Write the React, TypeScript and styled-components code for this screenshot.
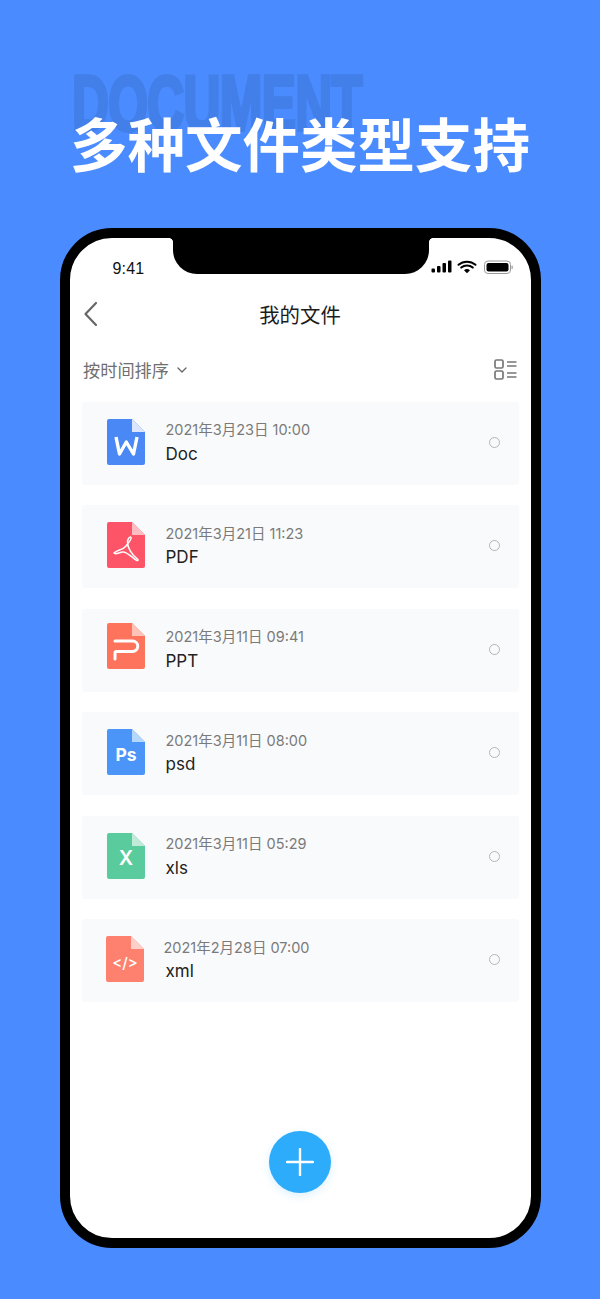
import React from "react";
import styled, { createGlobalStyle } from "styled-components";

const Global = createGlobalStyle`
  html, body { margin: 0; padding: 0; }
  body { background: #4a8cff; font-family: "Inter", "Noto Sans CJK SC", sans-serif; }
`;
const Page = styled.div`
  width: 600px; height: 1299px; background: #4a8cff; overflow: hidden;
  display: flex; flex-direction: column; align-items: center;
`;
const Hero = styled.div`
  position: relative; width: 600px; height: 228px; flex: none;
`;
const Ghost = styled.div`
  position: absolute; left: 72px; top: 58px;
  font: 900 78px/90px "Liberation Sans", sans-serif;
  -webkit-text-stroke: 4px #437fe9;
  color: #437fe9; letter-spacing: -1px; white-space: nowrap;
  transform: scaleX(0.655); transform-origin: left top;
`;
const Headline = styled.h1`
  position: relative; margin: 0; padding-top: 100px; text-align: center;
  font: 700 57.5px/84px "Noto Sans CJK SC", sans-serif; color: #fff; white-space: nowrap;
`;
const Phone = styled.div`
  position: relative; box-sizing: border-box; width: 481px; height: 1020px; flex: none;
  background: #fff; border: 10.5px solid #000; border-radius: 52px; overflow: hidden;
  display: flex; flex-direction: column;
`;
const Notch = styled.div`
  position: absolute; left: 103px; top: 0; width: 256px; height: 36px;
  background: #000; border-radius: 0 0 24px 24px;
  &::before, &::after {
    content: ""; position: absolute; top: 0; width: 4px; height: 4px;
  }
  &::before { left: -4px; background: radial-gradient(circle at 0 100%, transparent 3.6px, #000 4.2px); }
  &::after { right: -4px; background: radial-gradient(circle at 100% 100%, transparent 3.6px, #000 4.2px); }
`;
const StatusBar = styled.div`
  display: flex; align-items: center; justify-content: space-between; flex: none;
  height: 36px; padding: 11px 18px 0 42px;
`;
const Time = styled.span`
  font: 400 16px/20px "Liberation Sans", sans-serif; color: #111; letter-spacing: 0.2px;
  margin: 4px 0 0 1px;
`;
const NavBar = styled.div`
  position: relative; flex: none; height: 43px; margin-top: 7px;
  display: flex; align-items: center; justify-content: center;
`;
const Back = styled.svg`
  position: absolute; left: 13px; top: 9px; width: 15px; height: 26px;
`;
const NavTitle = styled.div`
  font: 400 20.4px/28px "Noto Sans CJK SC", sans-serif; color: #1c1c1c;
`;
const SortBar = styled.div`
  flex: none; height: 40px; margin-top: 14.5px; padding: 0 14px 0 13px;
  display: flex; align-items: center; justify-content: space-between;
`;
const SortLabel = styled.div`
  display: flex; align-items: center; gap: 8px; margin-left: 0.5px;
  font: 400 17.2px/24px "Noto Sans CJK SC", sans-serif; color: #6f6f6f;
`;
const List = styled.div`
  flex: none; margin: 12px 12px 0; display: flex; flex-direction: column; gap: 20.5px;
`;
const Row = styled.div`
  box-sizing: border-box; height: 83px; background: #f9fafc; border-radius: 3px;
  display: flex; align-items: center; padding: 0 19px 0 25.5px;
`;
const IconWrap = styled.svg<{ $shift?: number; $lift?: number }>`
  width: 38px; height: 46px; flex: none;
  margin-top: ${(p) => -3 - (p.$lift ?? 0) * 2}px;
  margin-left: ${(p) => p.$shift ?? 0}px;
  margin-right: ${(p) => 20.5 - (p.$shift ?? 0)}px;
`;
const Texts = styled.div`
  flex: 1; display: flex; flex-direction: column; gap: 1.5px; margin-top: -1.5px;
`;
const DateText = styled.div<{ $shift?: number }>`
  margin-left: ${(p) => p.$shift ?? 0}px;
  font: 400 14.5px/21px "Inter", "Noto Sans CJK SC", sans-serif; color: #7a7a7a;
  white-space: nowrap;
`;
const Name = styled.div`
  font: 400 17px/24px "Inter", "Noto Sans CJK SC", sans-serif; color: #222;
`;
const Radio = styled.div`
  box-sizing: border-box; width: 11px; height: 11px; border-radius: 50%; margin-top: -2px;
  border: 1.5px solid #b5b5b5; flex: none;
`;
const Fab = styled.div`
  position: absolute; left: 199px; bottom: 45px; width: 62px; height: 62px; border-radius: 50%;
  background: #2dacfb; box-shadow: 0 3px 8px rgba(45, 172, 251, 0.16);
  display: flex; align-items: center; justify-content: center;
`;

type Item = {
  date: string; name: string; color: string; fold: string; art: React.ReactNode;
  iconShift?: number; dateShift?: number; iconLift?: number;
};
const glyph = { fill: "#fff", fontFamily: "Inter, sans-serif", fontWeight: 700, textAnchor: "middle" as const };
const items: Item[] = [
  {
    date: "2021年3月23日 10:00", name: "Doc", color: "#4a88f5", fold: "#dbe5fb",
    art: <path d="M9 18 12.5 35 19.3 23 26.5 35 30 18" fill="none" stroke="#fff" strokeWidth="3.4" strokeLinejoin="round" />,
  },
  {
    date: "2021年3月21日 11:23", name: "PDF", color: "#fd5467", fold: "#febcc3",
    art: <path d="M7 31C11 27 15 29 19 24 22 20 25 17 24 15.5 23 14 20.5 17 20.5 20 20.5 26 25 33 30 36.5 32 38 31 39 29 38 24 35 20 29 15 30 11 31 8 33 7 31Z" fill="none" stroke="#fff" strokeWidth="1.5" strokeLinejoin="round" />,
  },
  {
    date: "2021年3月11日 09:41", name: "PPT", color: "#fe735c", fold: "#ffc2b8", iconLift: 2.4,
    art: <path d="M8 18H25.5a5.2 5.2 0 0 1 0 10.5H9.5A1.5 1.5 0 0 0 8 30V36" fill="none" stroke="#fff" strokeWidth="3" strokeLinecap="round" strokeLinejoin="round" />,
  },
  {
    date: "2021年3月11日 08:00", name: "psd", color: "#4c95f8", fold: "#b5d7fb", iconLift: 0.5,
    art: <text x="19" y="32" fontSize="17.5" {...glyph}>Ps</text>,
  },
  {
    date: "2021年3月11日 05:29", name: "xls", color: "#5acb9d", fold: "#c2eadb",
    art: <text x="19" y="32" fontSize="20" {...glyph} fontWeight={600}>X</text>,
  },
  {
    date: "2021年2月28日 07:00", name: "xml", color: "#fe8170", fold: "#ffd0c9", iconShift: -1, dateShift: -2,
    art: <text x="19" y="32" fontSize="15" {...glyph} fontWeight={500}>{"</>"}</text>,
  },
];

function FileIcon({ item }: { item: Item }) {
  return (
    <IconWrap viewBox="0 0 38 46" $shift={item.iconShift} $lift={item.iconLift}>
      <path d="M2 0H25L38 13V44a2 2 0 0 1-2 2H2a2 2 0 0 1-2-2V2a2 2 0 0 1 2-2Z" fill={item.color} />
      <path d="M25 0 38 13H25Z" fill={item.fold} />
      {item.art}
    </IconWrap>
  );
}

export default function App() {
  return (
    <Page>
      <Global />
      <Hero>
        <Ghost>DOCUMENT</Ghost>
        <Headline>多种文件类型支持</Headline>
      </Hero>
      <Phone>
        <Notch />
        <StatusBar>
          <Time>9:41</Time>
          <svg width="82" height="15" viewBox="0 0 82 15">
            <rect x="0.5" y="8.5" width="3.5" height="4" rx="1" fill="#000" />
            <rect x="6" y="6" width="3.5" height="6.5" rx="1" fill="#000" />
            <rect x="11.5" y="3" width="3.5" height="9.5" rx="1" fill="#000" />
            <rect x="17" y="0.5" width="3.5" height="12" rx="1" fill="#000" />
            <path d="M27.5 4.8a13 13 0 0 1 17 0M30.2 7.6a9 9 0 0 1 11.6 0" fill="none" stroke="#000" strokeWidth="2" strokeLinecap="round" />
            <path d="M33 10.3a4.8 4.8 0 0 1 6 0L36 13.2Z" fill="#000" />
            <rect x="53.5" y="1" width="26" height="12.5" rx="3.5" fill="none" stroke="#999" strokeWidth="1" />
            <rect x="55.5" y="3" width="22" height="8.5" rx="2" fill="#000" />
            <rect x="80.5" y="5.5" width="1.2" height="3.5" rx="0.6" fill="#999" />
          </svg>
        </StatusBar>
        <NavBar>
          <Back viewBox="0 0 15 26">
            <path d="M13 2 2.5 13 13 24" fill="none" stroke="#666" strokeWidth="2.2" strokeLinecap="round" strokeLinejoin="round" />
          </Back>
          <NavTitle>我的文件</NavTitle>
        </NavBar>
        <SortBar>
          <SortLabel>
            按时间排序
            <svg width="10" height="6" viewBox="0 0 10 6">
              <path d="M1 1 5 5 9 1" fill="none" stroke="#666" strokeWidth="1.3" strokeLinecap="round" strokeLinejoin="round" />
            </svg>
          </SortLabel>
          <svg width="23" height="21" viewBox="0 0 23 21">
            <rect x="1" y="1" width="8" height="8" rx="1.5" fill="none" stroke="#777" strokeWidth="1.7" />
            <rect x="1" y="12" width="8" height="8" rx="1.5" fill="none" stroke="#777" strokeWidth="1.7" />
            <path d="M13 3h9.5M13 7h9.5M13 14h9.5M13 18h9.5" stroke="#777" strokeWidth="1.6" />
          </svg>
        </SortBar>
        <List>
          {items.map((item) => (
            <Row key={item.name}>
              <FileIcon item={item} />
              <Texts>
                <DateText $shift={item.dateShift}>{item.date}</DateText>
                <Name>{item.name}</Name>
              </Texts>
              <Radio />
            </Row>
          ))}
        </List>
        <Fab>
          <svg width="28" height="28" viewBox="0 0 28 28">
            <path d="M14 1V27M1 14H27" stroke="#fff" strokeWidth="2.4" strokeLinecap="round" />
          </svg>
        </Fab>
      </Phone>
    </Page>
  );
}
